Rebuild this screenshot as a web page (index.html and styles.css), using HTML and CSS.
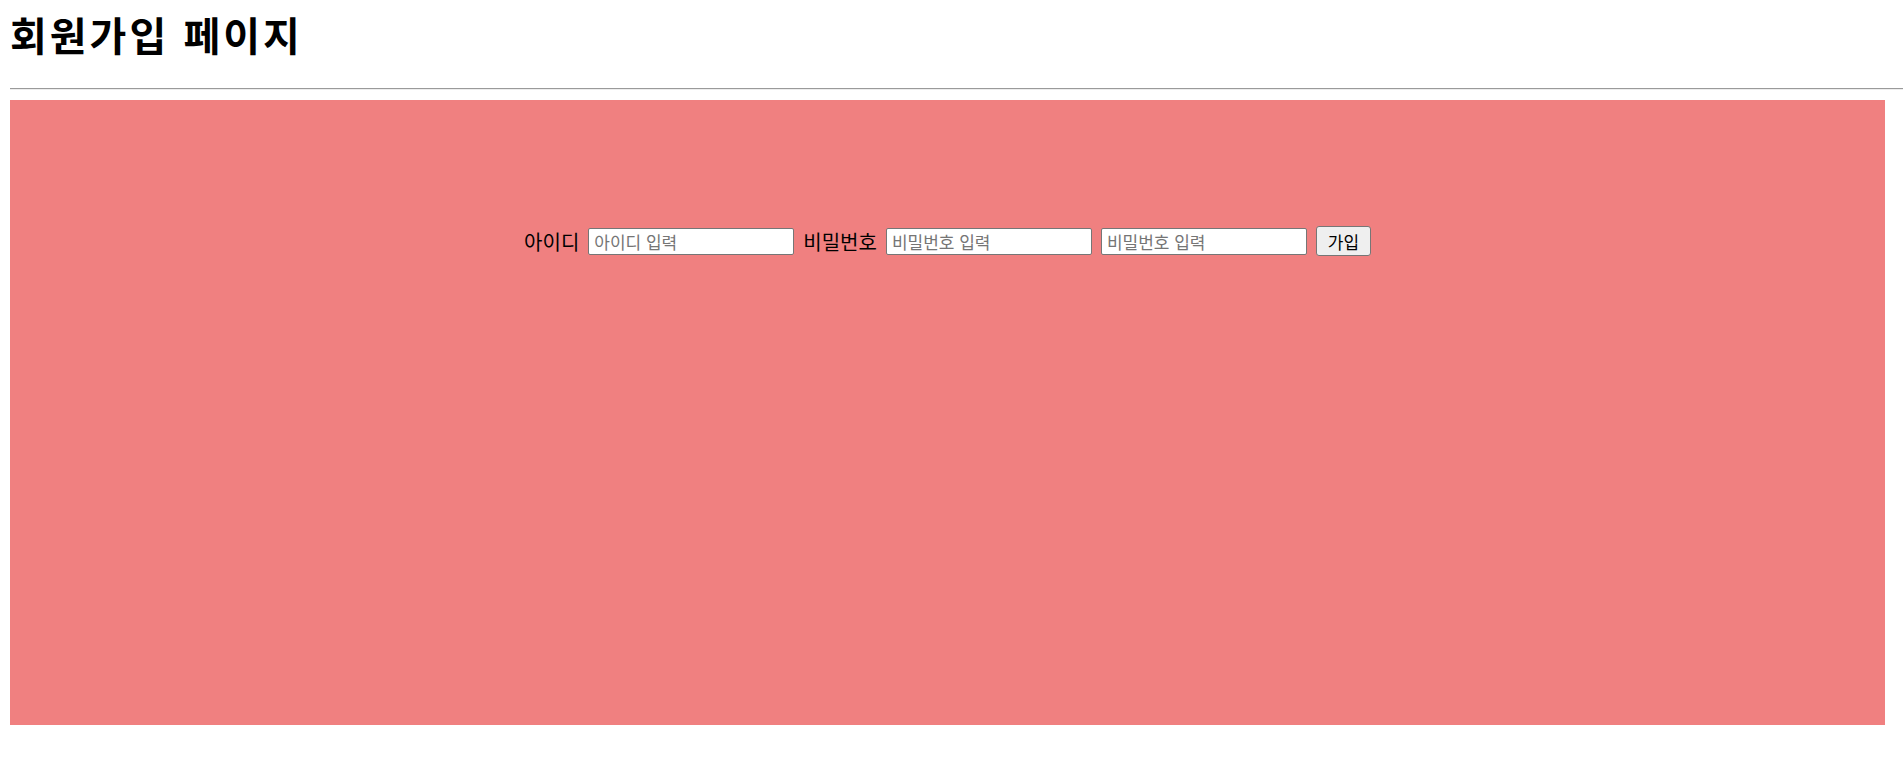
FILE: index.html
```html
<!DOCTYPE html>
<html lang="ko">
<head>
<meta charset="utf-8">
<title>회원가입 페이지</title>
<link rel="stylesheet" href="styles.css">
</head>
<body>
<h1 class="title">회원가입 페이지</h1>
<hr class="divider">
<div class="panel">
  <form class="join-form">
    <label class="label" for="uid">아이디</label>
    <input class="field" id="uid" type="text" placeholder="아이디 입력">
    <label class="label" for="pw">비밀번호</label>
    <input class="field" id="pw" type="password" placeholder="비밀번호 입력">
    <input class="field" id="pw2" type="password" placeholder="비밀번호 입력">
    <button class="btn" type="button">가입</button>
  </form>
</div>
</body>
</html>
```
FILE: styles.css
```css
html, body {
  margin: 0;
  padding: 0;
  background: #fff;
}
body {
  padding-left: 10px;
  font-family: "Noto Sans CJK KR", "Noto Sans", sans-serif;
  color: #000;
}
.title {
  margin: 5px 0 0;
  font-size: 40px;
  font-weight: 700;
  line-height: 58px;
  letter-spacing: 3px;
}
.divider {
  margin: 25px 0 10px;
  border: 0;
  border-top: 1px solid #9a9a9a;
  border-bottom: 1px solid #ededed;
  height: 0;
}
.panel {
  width: 1875px;
  height: 625px;
  background: #f08080;
  box-sizing: border-box;
  padding-top: 126px;
}
.join-form {
  display: flex;
  justify-content: center;
  align-items: center;
  gap: 9px;
  height: 30px;
}
.label {
  font-size: 20px;
  line-height: 27px;
  color: #000;
}
.field {
  width: 206px;
  height: 27px;
  box-sizing: border-box;
  border: 1px solid #767676;
  border-radius: 2px;
  background: #fff;
  padding: 1px 5px;
  font-family: "Noto Sans CJK KR", "Noto Sans", sans-serif;
  font-size: 17px;
  margin: 0;
}
.field::placeholder {
  color: #757575;
}
.btn {
  width: 55px;
  height: 30px;
  box-sizing: border-box;
  border: 1px solid #767676;
  border-radius: 3px;
  background: #efefef;
  font-family: "Noto Sans CJK KR", "Noto Sans", sans-serif;
  font-size: 17px;
  color: #000;
  padding: 0;
  margin: 0;
}
```
